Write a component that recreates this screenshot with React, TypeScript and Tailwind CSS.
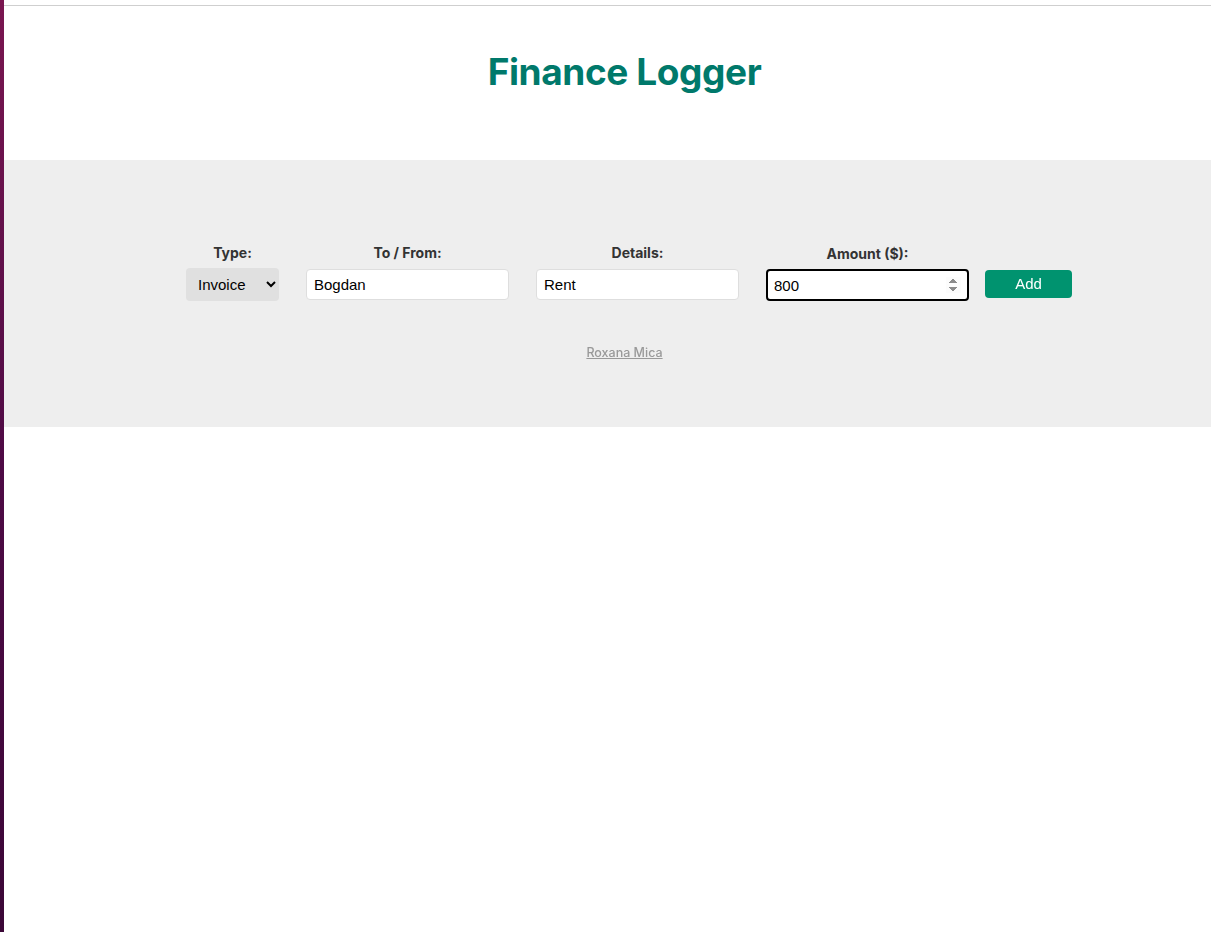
import { useState } from "react";

const fields = [
  { label: "To / From:", value: "Bogdan", type: "text" },
  { label: "Details:", value: "Rent", type: "text" },
];

export default function App() {
  const [kind, setKind] = useState("invoice");
  const [amount, setAmount] = useState("800");

  return (
    <div className="flex min-h-[932px] bg-white font-['Inter',sans-serif]">
      {/* wallpaper strip on the left edge */}
      <div className="w-[4px] shrink-0 bg-gradient-to-b from-[#7a1650] via-[#4e0a45] to-[#3b0737]" />

      <div className="flex-1">
        {/* ─── HEADER ─── */}
        <header className="h-[160px] pt-[5px]">
          <div className="border-t border-[#cfcfcf] pl-[34px] pt-[38px] text-center">
            <h1 className="text-[37px] font-bold tracking-[-0.4px] text-[#00796b]">Finance Logger</h1>
          </div>
        </header>

        {/* ─── FORM ─── */}
        <section className="h-[267px] bg-[#eeeeee] pl-[43px] pt-[82px]">
          <form className="flex items-end justify-center" onSubmit={(e) => e.preventDefault()}>
            <div className="flex flex-col items-center gap-[5px]">
              <label className="text-[14px] font-bold text-[#333]">Type:</label>
              <select
                value={kind}
                onChange={(e) => setKind(e.target.value)}
                className="h-[33px] w-[93px] rounded-[4px] bg-[#e0e0e0] px-[8px] font-['Liberation_Sans',sans-serif] text-[15px] text-black"
              >
                <option value="invoice">Invoice</option>
                <option value="payment">Payment</option>
              </select>
            </div>

            {fields.map((f) => (
              <div key={f.label} className="ml-[27px] flex flex-col items-center gap-[6px]">
                <label className="text-[14px] font-bold text-[#333]">{f.label}</label>
                <input
                  type={f.type}
                  defaultValue={f.value}
                  className="mb-[1px] h-[31px] w-[203px] rounded-[4px] border border-[#dedede] bg-white px-[7px] font-['Liberation_Sans',sans-serif] text-[15px] text-black outline-none"
                />
              </div>
            ))}

            <div className="ml-[27px] flex flex-col items-center gap-[5px]">
              <label className="text-[14px] font-bold text-[#333]">Amount ($):</label>
              <input
                type="number"
                autoFocus
                value={amount}
                onChange={(e) => setAmount(e.target.value)}
                className="h-[32px] w-[203px] rounded-[4px] border-2 border-black bg-white px-[6px] font-['Liberation_Sans',sans-serif] text-[15px] text-black outline-none"
              />
            </div>

            <button
              type="submit"
              className="mb-[3px] ml-[16px] h-[28px] w-[87px] rounded-[4px] bg-[#00936f] font-['Liberation_Sans',sans-serif] text-[15px] text-white"
            >
              Add
            </button>
          </form>

          <div className="mt-[38px] pr-[9px] text-center">
            <a href="#" className="text-[12.5px] font-medium text-[#999] underline">
              Roxana Mica
            </a>
          </div>
        </section>
      </div>
    </div>
  );
}
